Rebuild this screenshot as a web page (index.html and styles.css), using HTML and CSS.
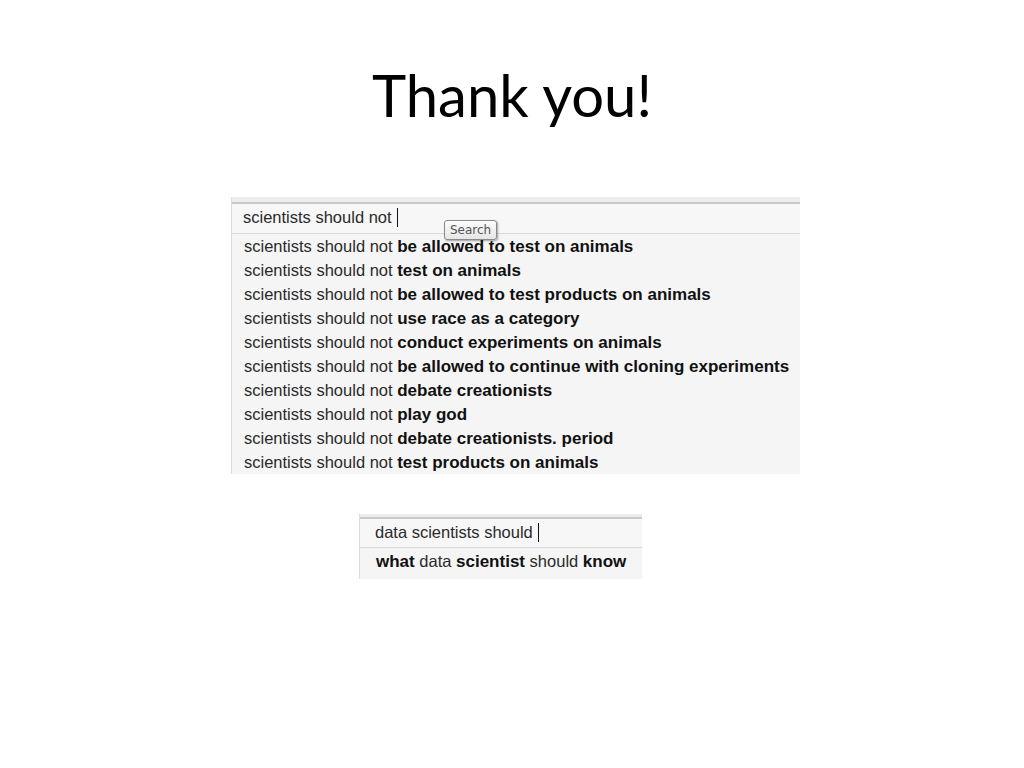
FILE: index.html
```html
<!DOCTYPE html>
<html>
<head>
<meta charset="utf-8">
<link rel="stylesheet" href="styles.css">
</head>
<body>
<div class="slide">
  <h1 class="title">Thank you!</h1>
  <div class="shot shot-main">
    <div class="topband"></div>
    <div class="input"><span class="typed">scientists should not</span><span class="caret"></span></div>
    <ul class="list">
      <li>scientists should not <b>be allowed to test on animals</b></li>
      <li>scientists should not <b>test on animals</b></li>
      <li>scientists should not <b>be allowed to test products on animals</b></li>
      <li>scientists should not <b>use race as a category</b></li>
      <li>scientists should not <b>conduct experiments on animals</b></li>
      <li>scientists should not <b>be allowed to continue with cloning experiments</b></li>
      <li>scientists should not <b>debate creationists</b></li>
      <li>scientists should not <b>play god</b></li>
      <li>scientists should not <b>debate creationists. period</b></li>
      <li>scientists should not <b>test products on animals</b></li>
    </ul>
    <div class="tooltip">Search</div>
  </div>
  <div class="shot shot-small">
    <div class="topband"></div>
    <div class="input"><span class="typed">data scientists should</span><span class="caret"></span></div>
    <ul class="list">
      <li><b>what</b> data <b>scientist</b> should <b>know</b></li>
    </ul>
  </div>
</div>
</body>
</html>
```

FILE: styles.css
```css
html, body {
  margin: 0;
  padding: 0;
  background: #ffffff;
}

.slide {
  width: 1024px;
  height: 768px;
  display: flex;
  flex-direction: column;
}

.title {
  margin: 0;
  padding-top: 61px;
  height: 135px;
  box-sizing: border-box;
  text-align: center;
  font-family: "Lato", "Liberation Sans", sans-serif;
  font-weight: 400;
  font-size: 58px;
  line-height: 68px;
  color: #000;
}

.shot {
  position: relative;
  background: #f5f5f5;
  font-family: "Liberation Sans", Arial, sans-serif;
  color: #2a2a2a;
  border-left: 1px solid #dcdcdc;
}

.shot-main {
  margin-left: 231px;
  width: 568px;
  margin-top: 62px;
}

.shot-small {
  margin-left: 359px;
  width: 282px;
  margin-top: 40px;
}

.topband {
  height: 5px;
  background: #ededed;
  border-bottom: 2px solid #c9c9c9;
}

.shot-small .topband {
  height: 3px;
}

.input {
  height: 27px;
  padding-bottom: 2px;
  display: flex;
  align-items: center;
  padding-left: 11px;
  background: #f7f7f7;
  border-bottom: 1px solid #d8d8d8;
  font-size: 16.5px;
}

.shot-small .input {
  height: 26px;
  padding-bottom: 2px;
  padding-left: 15px;
}

.caret {
  display: inline-block;
  width: 1px;
  height: 19px;
  background: #111;
  margin-left: 5px;
}

.list {
  list-style: none;
  margin: 0;
  padding: 0 0 0 12px;
}

.shot-small .list {
  padding-left: 16px;
}

.list li {
  height: 24px;
  line-height: 24px;
  font-size: 16.5px;
  white-space: nowrap;
}

.shot-small .list li {
  height: 28px;
  line-height: 26px;
  padding-bottom: 3px;
}

.list b {
  font-size: 17px;
  color: #111;
}

.tooltip {
  position: absolute;
  left: 212px;
  top: 23px;
  height: 18px;
  padding: 0 5px;
  line-height: 18px;
  font-family: "DejaVu Sans", "Liberation Sans", sans-serif;
  font-size: 12px;
  color: #555;
  background: linear-gradient(#fbfbfb, #e6e6e6);
  border: 1px solid #8a8a8a;
  border-radius: 3px;
  box-shadow: 1px 1px 2px rgba(0,0,0,0.35);
}
```
